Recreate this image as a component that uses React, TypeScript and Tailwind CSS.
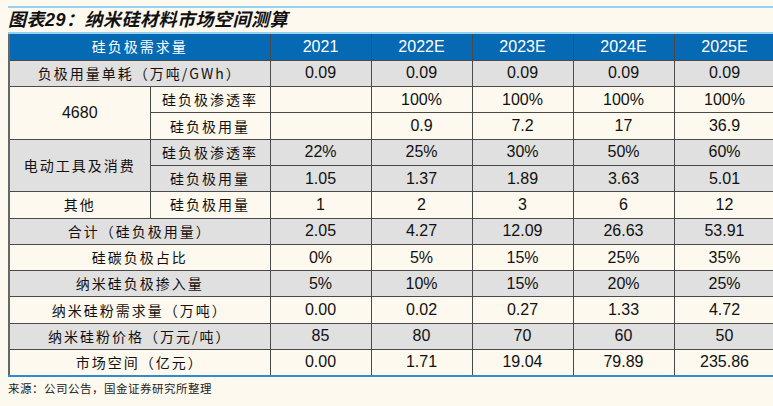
const cjk = "font-['Liberation_Sans','Noto_Sans_CJK_SC',sans-serif]"

type Row = {
  label: string
  sub?: string
  group?: string
  span?: number
  gray: boolean
  values: string[]
}

const rows: Row[] = [
  { label: "负极用量单耗（万吨/GWh）", gray: true, values: ["0.09", "0.09", "0.09", "0.09", "0.09"] },
  { label: "", group: "4680", span: 2, sub: "硅负极渗透率", gray: false, values: ["", "100%", "100%", "100%", "100%"] },
  { label: "", sub: "硅负极用量", gray: false, values: ["", "0.9", "7.2", "17", "36.9"] },
  { label: "", group: "电动工具及消费", span: 2, sub: "硅负极渗透率", gray: true, values: ["22%", "25%", "30%", "50%", "60%"] },
  { label: "", sub: "硅负极用量", gray: true, values: ["1.05", "1.37", "1.89", "3.63", "5.01"] },
  { label: "", group: "其他", span: 1, sub: "硅负极用量", gray: false, values: ["1", "2", "3", "6", "12"] },
  { label: "合计（硅负极用量）", gray: true, values: ["2.05", "4.27", "12.09", "26.63", "53.91"] },
  { label: "硅碳负极占比", gray: false, values: ["0%", "5%", "15%", "25%", "35%"] },
  { label: "纳米硅负极掺入量", gray: true, values: ["5%", "10%", "15%", "20%", "25%"] },
  { label: "纳米硅粉需求量（万吨）", gray: false, values: ["0.00", "0.02", "0.27", "1.33", "4.72"] },
  { label: "纳米硅粉价格（万元/吨）", gray: true, values: ["85", "80", "70", "60", "50"] },
  { label: "市场空间（亿元）", gray: false, values: ["0.00", "1.71", "19.04", "79.89", "235.86"] },
]

const years = ["2021", "2022E", "2023E", "2024E", "2025E"]

export default function App() {
  return (
    <div className={`w-[773px] h-[406px] overflow-hidden bg-[#fdf9ef] ${cjk}`}>
      <div className="pl-[8px] pt-[6px]">
        <div className="h-[2px] bg-[#94d2ef] w-[800px]" />
        <div className="h-[24px] flex items-center text-[18px] font-bold italic text-[#111] tracking-[0.5px]">
          图表29：纳米硅材料市场空间测算
        </div>
        <div className="h-[2px] bg-[#94d2ef] w-[800px]" />
        <table className="table-fixed border-collapse w-[766px] border-l-2 border-l-[#666] border-b-2 border-b-[#2f8ccb]">
          <colgroup>
            <col className="w-[141px]" />
            <col className="w-[120px]" />
            <col className="w-[101px]" />
            <col className="w-[101px]" />
            <col className="w-[101px]" />
            <col className="w-[101px]" />
            <col className="w-[101px]" />
          </colgroup>
          <tbody>
            <tr className="h-[26.3px] bg-[#0669b4] text-white">
              <td colSpan={2} className="border-r border-[#4a4a4a] text-center text-[14px] tracking-[2px] font-['Noto_Sans_CJK_SC',sans-serif]">
                硅负极需求量
              </td>
              {years.map((y) => (
                <td key={y} className="border-r border-[#4a4a4a] text-center text-[16px] font-['Liberation_Sans',sans-serif]">
                  {y}
                </td>
              ))}
            </tr>
            {rows.map((r, i) => (
              <tr key={i} className={`h-[26.3px] ${r.gray ? "bg-[#e0e0e0]" : "bg-[#fdf9ef]"} text-[#111]`}>
                {r.sub === undefined ? (
                  <td colSpan={2} className="border border-[#4a4a4a] border-l-0 text-center text-[14px] tracking-[2px] font-['Noto_Sans_CJK_SC',sans-serif]">
                    {r.label}
                  </td>
                ) : (
                  <>
                    {r.group !== undefined && (
                      <td
                        rowSpan={r.span}
                        className={`border border-[#4a4a4a] border-l-0 text-center ${
                          r.group === "4680"
                            ? "text-[16px] font-['Liberation_Sans',sans-serif]"
                            : "text-[14px] tracking-[2px] font-['Noto_Sans_CJK_SC',sans-serif]"
                        }`}
                      >
                        {r.group}
                      </td>
                    )}
                    <td className="border border-[#4a4a4a] text-center text-[14px] tracking-[2px] font-['Noto_Sans_CJK_SC',sans-serif]">
                      {r.sub}
                    </td>
                  </>
                )}
                {r.values.map((v, j) => (
                  <td key={j} className="border border-[#4a4a4a] text-center text-[16px] font-['Liberation_Sans',sans-serif]">
                    {v}
                  </td>
                ))}
              </tr>
            ))}
          </tbody>
        </table>
        <div className="mt-[3px] text-[11.5px] tracking-[0.5px] text-[#222] font-['Noto_Sans_CJK_SC',sans-serif]">
          来源：公司公告，国金证券研究所整理
        </div>
      </div>
    </div>
  )
}
